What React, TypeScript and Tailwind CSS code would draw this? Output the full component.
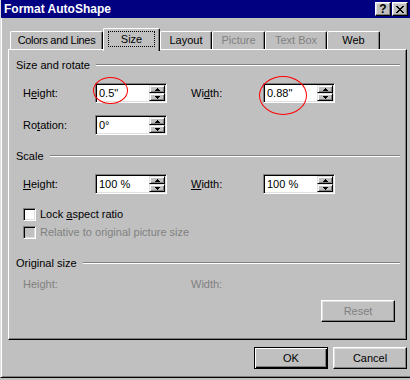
const raised =
  'border border-t-white border-l-white border-r-black border-b-black shadow-[inset_-1px_-1px_0_#808080,inset_1px_1px_0_#dfdfdf]'
const sunken =
  'border border-t-[#808080] border-l-[#808080] border-r-white border-b-white shadow-[inset_1px_1px_0_#000,inset_-1px_-1px_0_#dfdfdf]'

function Arrow({ down }: { down?: boolean }) {
  return (
    <svg width="5" height="3" viewBox="0 0 5 3" shapeRendering="crispEdges" className={down ? 'rotate-180' : ''}>
      <rect x="2" y="0" width="1" height="1" />
      <rect x="1" y="1" width="3" height="1" />
      <rect x="0" y="2" width="5" height="1" />
    </svg>
  )
}

function Field({ value }: { value: string }) {
  return (
    <div className={`flex h-[20px] w-[72px] bg-white p-[1px] ${sunken}`}>
      <div className="flex-1 pl-[2px] leading-[16px]">{value}</div>
      <div className="flex w-[16px] flex-col">
        <div className="flex h-[8px] items-center justify-center border border-t-[#dfdfdf] border-l-[#dfdfdf] border-r-black border-b-black bg-[#c0c0c0] shadow-[inset_1px_1px_0_#fff,inset_-1px_-1px_0_#808080]">
          <Arrow />
        </div>
        <div className="flex h-[8px] items-center justify-center border border-t-[#dfdfdf] border-l-[#dfdfdf] border-r-black border-b-black bg-[#c0c0c0] shadow-[inset_1px_1px_0_#fff,inset_-1px_-1px_0_#808080]">
          <Arrow down />
        </div>
      </div>
    </div>
  )
}

function Header({ title }: { title: string }) {
  return (
    <div className="flex h-[14px] items-center gap-[6px] leading-[14px]">
      <span>{title}</span>
      <div className="h-[2px] flex-1 border-t border-b border-t-[#808080] border-b-white" />
    </div>
  )
}

function Check({ children, disabled }: { children: React.ReactNode; disabled?: boolean }) {
  return (
    <div className="flex h-[13px] items-center pl-[7px] leading-[13px]">
      <div className={`h-[13px] w-[13px] ${sunken} ${disabled ? 'bg-[#c0c0c0]' : 'bg-white'}`} />
      <span className={`ml-[4px] ${disabled ? 'text-[#808080]' : ''}`}>{children}</span>
    </div>
  )
}

function CloseGlyph() {
  const cells = [
    [0, 0], [1, 0], [6, 0], [7, 0],
    [1, 1], [2, 1], [5, 1], [6, 1],
    [2, 2], [3, 2], [4, 2], [5, 2],
    [3, 3], [4, 3],
    [2, 4], [3, 4], [4, 4], [5, 4],
    [1, 5], [2, 5], [5, 5], [6, 5],
    [0, 6], [1, 6], [6, 6], [7, 6],
  ]
  return (
    <svg width="8" height="7" viewBox="0 0 8 7" shapeRendering="crispEdges">
      {cells.map(([x, y]) => (
        <rect key={`${x}-${y}`} x={x} y={y} width="1" height="1" />
      ))}
    </svg>
  )
}

export default function App() {
  return (
    <div className="h-[380px] w-[410px] bg-[#c0c0c0]">
      <div className="relative flex h-[378px] w-[410px] flex-col border-l border-b border-l-[#dfdfdf] border-b-black bg-[#c0c0c0] font-['Liberation_Sans',Arial,sans-serif] text-[11px] text-black shadow-[inset_1px_0_0_#fff,inset_0_-1px_0_#808080]">
        {/* title bar */}
        <div className="flex h-[18px] shrink-0 items-center bg-[#000080] pl-[3px] pr-[2px]">
          <span className="text-[12px] font-bold leading-none text-white">Format AutoShape</span>
          <div className="ml-auto flex gap-[1px]">
            <div className={`flex h-[14px] w-[16px] items-center justify-center bg-[#c0c0c0] ${raised}`}>
              <span className="text-[12px] font-bold leading-none">?</span>
            </div>
            <div className={`flex h-[14px] w-[16px] items-center justify-center bg-[#c0c0c0] ${raised}`}>
              <CloseGlyph />
            </div>
          </div>
        </div>

        {/* tabs */}
        <div className="mt-[10px] flex h-[21px] shrink-0 items-end pl-[9px]">
          <div className="flex h-[18px] w-[93px] items-center justify-center rounded-t-[2px] border-t border-l border-r border-t-white border-l-white border-r-black tracking-[-0.3px] shadow-[inset_-1px_0_0_#808080]">
            Colors and Lines
          </div>
          <div className="relative z-10 -mb-[2px] flex h-[23px] w-[57px] justify-center rounded-t-[2px] border-t border-l border-r border-t-white border-l-white border-r-black bg-[#c0c0c0] pt-[2px] shadow-[inset_-1px_0_0_#808080]">
            <div className="flex h-[16px] w-[47px] items-center justify-center border border-dotted border-black">Size</div>
          </div>
          <div className="flex h-[18px] w-[52px] items-center justify-center rounded-t-[2px] border-t border-l border-r border-t-white border-l-white border-r-black shadow-[inset_-1px_0_0_#808080]">
            Layout
          </div>
          <div className="flex h-[18px] w-[53px] items-center justify-center rounded-t-[2px] border-t border-l border-r border-t-white border-l-white border-r-black text-[#808080] shadow-[inset_-1px_0_0_#808080]">
            Picture
          </div>
          <div className="flex h-[18px] w-[62px] items-center justify-center rounded-t-[2px] border-t border-l border-r border-t-white border-l-white border-r-black text-[#808080] shadow-[inset_-1px_0_0_#808080]">
            Text Box
          </div>
          <div className="flex h-[18px] w-[53px] items-center justify-center rounded-t-[2px] border-t border-l border-r border-t-white border-l-white border-r-black shadow-[inset_-1px_0_0_#808080]">
            Web
          </div>
        </div>

        {/* panel */}
        <div className="ml-[7px] flex h-[291px] w-[399px] shrink-0 flex-col border border-t-white border-l-white border-r-black border-b-black pt-[8px] pl-[7px] pr-[6px] shadow-[inset_-1px_-1px_0_#808080]">
          <Header title="Size and rotate" />
          <div className="mt-[11px] flex h-[20px] items-center pl-[7px]">
            <span className="w-[72px]">
              H<u>e</u>ight:
            </span>
            <Field value={'0.5"'} />
            <span className="ml-[24px] w-[72px]">
              Wi<u>d</u>th:
            </span>
            <Field value={'0.88"'} />
          </div>
          <div className="mt-[12px] flex h-[20px] items-center pl-[7px]">
            <span className="w-[72px]">
              Ro<u>t</u>ation:
            </span>
            <Field value="0°" />
          </div>

          <div className="mt-[14px]">
            <Header title="Scale" />
          </div>
          <div className="mt-[11px] flex h-[20px] items-center pl-[7px]">
            <span className="w-[72px]">
              <u>H</u>eight:
            </span>
            <Field value="100 %" />
            <span className="ml-[24px] w-[72px]">
              <u>W</u>idth:
            </span>
            <Field value="100 %" />
          </div>
          <div className="mt-[14px]">
            <Check>
              Lock <u>a</u>spect ratio
            </Check>
          </div>
          <div className="mt-[5px]">
            <Check disabled>Relative to original picture size</Check>
          </div>

          <div className="mt-[17px]">
            <Header title="Original size" />
          </div>
          <div className="mt-[7px] flex h-[14px] items-center pl-[7px] leading-[14px] text-[#808080]">
            <span className="w-[168px]">Height:</span>
            <span>Width:</span>
          </div>
          <div className="mt-[9px] flex justify-end pr-[5px]">
            <div className={`flex h-[22px] w-[74px] items-center justify-center text-[#808080] ${raised}`}>Reset</div>
          </div>
        </div>

        {/* buttons */}
        <div className="mt-[7px] ml-[7px] flex w-[399px] justify-end gap-[5px]">
          <div className="flex h-[22px] w-[74px] items-center justify-center border border-black shadow-[inset_1px_1px_0_#fff,inset_-1px_-1px_0_#000,inset_-2px_-2px_0_#808080]">
            OK
          </div>
          <div className={`flex h-[22px] w-[74px] items-center justify-center ${raised}`}>Cancel</div>
        </div>

        {/* hand-drawn red circles */}
        <div className="pointer-events-none absolute left-[92px] top-[77px] h-[27px] w-[35px] rounded-[50%] border border-[#ff0000]" />
        <div className="pointer-events-none absolute left-[258px] top-[76px] h-[39px] w-[48px] rounded-[50%] border border-[#ff0000]" />
      </div>
    </div>
  )
}
